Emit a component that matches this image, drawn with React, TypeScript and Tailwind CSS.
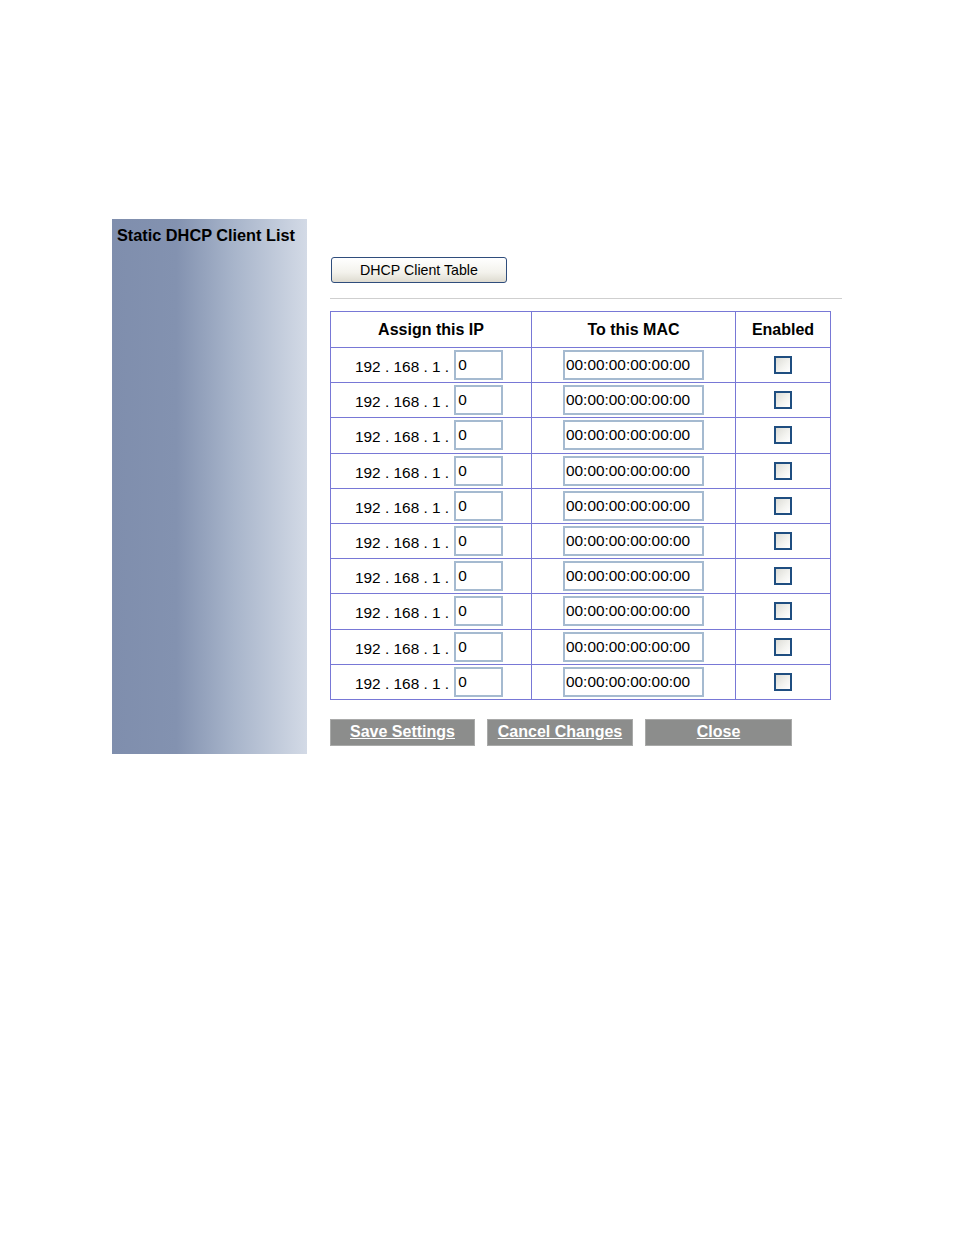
export default function App() {
  const rows = Array.from({ length: 10 }, (_, i) => i)

  return (
    <div className="min-h-screen bg-white font-['Liberation_Sans',Arial,sans-serif] text-black">
      <div className="flex pt-[219px] pl-[112px]">
        {/* Left title bar */}
        <div className="w-[195px] h-[535px] shrink-0 bg-[linear-gradient(to_right,#7f8ead_0%,#8392b0_33%,#a7b4ca_62%,#d3dae6_100%)]">
          <h1 className="pl-[5px] pt-[7px] text-[16.3px] leading-[18px] font-bold">Static DHCP Client List</h1>
        </div>

        {/* Content */}
        <div className="flex flex-col pl-[23px]">
          <button className="mt-[38px] ml-[1px] w-[176px] h-[26px] rounded-[3px] border border-[#2f4d7c] bg-[linear-gradient(to_bottom,#ffffff_0%,#f3f2ec_60%,#dedbd0_100%)] text-[14.2px] leading-none">
            DHCP Client Table
          </button>

          <div className="mt-[15px] w-[512px] h-[2px] border-t border-[#cfcfcf] border-b-[#eeeeee]" />

          <table className="mt-[11px] w-[500px] table-fixed border-collapse">
            <colgroup>
              <col className="w-[201px]" />
              <col className="w-[204px]" />
              <col className="w-[95px]" />
            </colgroup>
            <thead>
              <tr className="h-[36px]">
                <th className="border border-[#7878d6] text-[16px] font-bold">Assign this IP</th>
                <th className="border border-[#7878d6] text-[16px] font-bold">To this MAC</th>
                <th className="border border-[#7878d6] text-[16px] font-bold">Enabled</th>
              </tr>
            </thead>
            <tbody>
              {rows.map((i) => (
                <tr key={i} className="h-[35.2px]">
                  <td className="border border-[#7878d6] p-0">
                    <div className="flex items-center pl-[24px]">
                      <span className="mt-[4px] text-[15.4px] leading-[18px] whitespace-pre">192 . 168 . 1 .</span>
                      <input
                        defaultValue="0"
                        className="ml-[5px] w-[49px] h-[30px] border-2 border-[#a5bad0] px-[2px] text-[15.4px] outline-none"
                      />
                    </div>
                  </td>
                  <td className="border border-[#7878d6] p-0">
                    <div className="flex justify-center">
                      <input
                        defaultValue="00:00:00:00:00:00"
                        className="w-[141px] h-[30px] border-2 border-[#a5bad0] px-[1px] text-[15.4px] outline-none"
                      />
                    </div>
                  </td>
                  <td className="border border-[#7878d6] p-0">
                    <div className="flex justify-center">
                      <div className="w-[18px] h-[18px] border-2 border-[#1f4e80] bg-[linear-gradient(135deg,#dcdcd6_0%,#f2f2ee_55%,#ffffff_100%)]" />
                    </div>
                  </td>
                </tr>
              ))}
            </tbody>
          </table>

          <div className="mt-[19px] flex gap-[12px]">
            <button className="w-[145px] h-[27px] bg-[#8c8d8c] border border-[#a9aaa9] text-white text-[16px] font-bold underline leading-none">
              Save Settings
            </button>
            <button className="w-[146px] h-[27px] bg-[#8c8d8c] border border-[#a9aaa9] text-white text-[16px] font-bold underline leading-none">
              Cancel Changes
            </button>
            <button className="w-[147px] h-[27px] bg-[#8c8d8c] border border-[#a9aaa9] text-white text-[16px] font-bold underline leading-none">
              Close
            </button>
          </div>
        </div>
      </div>
    </div>
  )
}
